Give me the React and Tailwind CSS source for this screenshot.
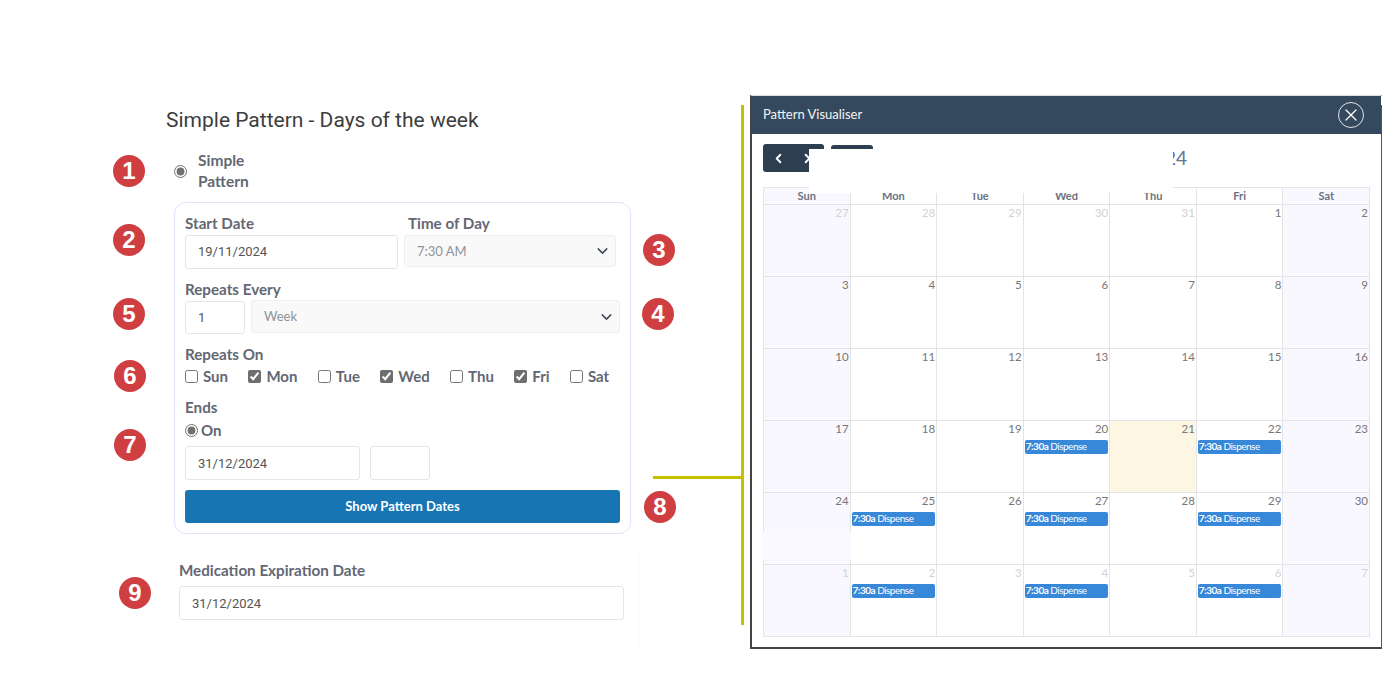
import { ChevronDown, ChevronLeft, ChevronRight, X } from "lucide-react";

const weeks = [
  [27, 28, 29, 30, 31, 1, 2],
  [3, 4, 5, 6, 7, 8, 9],
  [10, 11, 12, 13, 14, 15, 16],
  [17, 18, 19, 20, 21, 22, 23],
  [24, 25, 26, 27, 28, 29, 30],
  [1, 2, 3, 4, 5, 6, 7],
];

const dayNames = ["Sun", "Mon", "Tue", "Wed", "Thu", "Fri", "Sat"];
const checkedDays = ["Mon", "Wed", "Fri"];

// [week index, day index] of every cell that holds an event
const events = ["3-3", "3-5", "4-1", "4-3", "4-5", "5-1", "5-3", "5-5"];

const badges = [
  { n: 1, cls: "left-[113px] top-[155px]" },
  { n: 2, cls: "left-[113px] top-[224px]" },
  { n: 3, cls: "left-[643px] top-[234px]" },
  { n: 4, cls: "left-[642px] top-[298px]" },
  { n: 5, cls: "left-[113px] top-[298px]" },
  { n: 6, cls: "left-[114px] top-[360px]" },
  { n: 7, cls: "left-[114px] top-[429px]" },
  { n: 8, cls: "left-[644px] top-[491px]" },
  { n: 9, cls: "left-[119px] top-[577px]" },
];

function Badge({ n, cls }) {
  return (
    <div className={`absolute ${cls} flex h-8 w-8 items-center justify-center rounded-full bg-[#cf3f42] font-['Liberation_Sans',sans-serif] text-[24px] font-bold text-white`}>
      {n}
    </div>
  );
}

function Field({ value, className }) {
  return (
    <input
      readOnly
      defaultValue={value}
      className={`block rounded-[3px] border border-[#e6e6e6] bg-white px-3 font-['Roboto',sans-serif] text-[13px] text-[#555] outline-none ${className}`}
    />
  );
}

function Select({ value, className, selectClass = "" }) {
  return (
    <div className={`relative ${className}`}>
      <select
        disabled
        defaultValue={value}
        className={`h-full w-full appearance-none rounded-[3px] border border-[#efefef] bg-[#f9f9f9] px-3 text-[13px] text-[#8d9499] opacity-100 outline-none ${selectClass}`}
      >
        <option>{value}</option>
      </select>
      <ChevronDown className="absolute right-[5px] top-1/2 h-[17px] w-[17px] -translate-y-1/2 text-[#3f4756]" strokeWidth={2} />
    </div>
  );
}

function Label({ children, className = "" }) {
  return <div className={`text-[15.2px] font-bold leading-[18px] text-[#636773] ${className}`}>{children}</div>;
}

function PatternForm() {
  return (
    <div className="w-[750px] pl-[174px] pt-[108px]">
      <h2 className="-ml-2 font-['Roboto',sans-serif] text-[21px] leading-6 text-[#3d3d3d]">Simple Pattern - Days of the week</h2>
      <div className="mt-[18px] flex items-center gap-[11px]">
        <input type="radio" readOnly checked className="h-[13px] w-[13px] accent-[#707070]" />
        <div className="text-[15.5px] font-bold leading-[21px] text-[#636773]">
          Simple
          <br />
          Pattern
        </div>
      </div>

      <div className="mt-[10px] h-[332px] w-[457px] rounded-[12px] border border-[#e3e0fb] pl-[10px] pt-[11px]">
        <div className="flex">
          <div>
            <Label>Start Date</Label>
            <Field value="19/11/2024" className="mt-[3px] h-[34px] w-[213px] pb-[1px]" />
          </div>
          <div className="ml-[6px]">
            <Label className="ml-[4px]">Time of Day</Label>
            <Select value="7:30 AM" className="mt-[3px] h-[32px] w-[212px]" selectClass="pt-[1px]" />
          </div>
        </div>

        <Label className="mt-[11px]">Repeats Every</Label>
        <div className="mt-[2px] flex items-start gap-[6px]">
          <Field value="1" className="mt-[1px] h-[33px] w-[60px] pb-[1px]" />
          <Select value="Week" className="h-[33px] w-[369px]" />
        </div>

        <Label className="mt-[11px]">Repeats On</Label>
        <div className="mt-[4px] flex h-[18px] items-center gap-[20.4px]">
          {dayNames.map((d) => (
            <label key={d} className="flex items-center gap-[5px] text-[15px] font-bold text-[#636773]">
              <input type="checkbox" readOnly checked={checkedDays.includes(d)} className="h-[13px] w-[13px] accent-[#6e6e6e]" />
              {d}
            </label>
          ))}
        </div>

        <Label className="mt-[13px]">Ends</Label>
        <label className="mt-[5px] flex items-center gap-[3px] text-[15px] font-bold leading-[18px] text-[#636773]">
          <input type="radio" readOnly checked className="h-[13px] w-[13px] accent-[#707070]" />
          On
        </label>
        <div className="mt-[7px] flex gap-[10px]">
          <Field value="31/12/2024" className="h-[34px] w-[175px]" />
          <Field value="" className="h-[34px] w-[60px]" />
        </div>
        <button className="mt-[10px] block h-[33px] w-[435px] rounded-[3px] bg-[#1775b4] text-[13px] font-bold text-white">
          Show Pattern Dates
        </button>
      </div>

      <div className="ml-[5px] mt-[27px]">
        <Label>Medication Expiration Date</Label>
        <Field value="31/12/2024" className="mt-[7px] h-[34px] w-[445px]" />
      </div>
    </div>
  );
}

function Calendar() {
  return (
    <div className="ml-[11px] mt-[15px] w-[607px] border-l border-t border-[#e4e4e4]">
      <div className="grid h-[17px] grid-cols-7">
        {dayNames.map((d, i) => (
          <div
            key={d}
            className={`border-b border-r border-[#e4e4e4] text-center text-[11px] font-bold leading-[15px] text-[#6c7280] ${i === 0 || i === 6 ? "bg-[#f9f8ff]" : ""}`}
          >
            {d}
          </div>
        ))}
      </div>
      {weeks.map((week, w) => (
        <div key={w} className="grid h-[72px] grid-cols-7">
          {week.map((day, d) => {
            const other = w === 0 ? day > 20 : w === 5;
            const today = w === 3 && d === 4;
            const weekend = d === 0 || d === 6;
            return (
              <div
                key={d}
                className={`border-b border-r border-[#e4e4e4] px-[1px] ${today ? "bg-[#fdf6e3]" : weekend ? "bg-[#f9f8ff]" : ""}`}
              >
                <div className={`text-right text-[11.5px] leading-[16px] ${other ? "text-[#d2d2d2]" : "text-[#777]"}`}>{day}</div>
                {events.includes(`${w}-${d}`) && (
                  <div className="mt-[3px] flex h-[14px] items-center gap-[2px] whitespace-nowrap rounded-[2px] bg-[#3788d8] pb-[1px] pl-[1px] text-[10px] tracking-[-0.5px] text-white">
                    <b>7:30a</b>
                    <span>Dispense</span>
                  </div>
                )}
              </div>
            );
          })}
        </div>
      ))}
    </div>
  );
}

function Visualiser() {
  return (
    <div className="mt-[95px] h-[554px] w-[632px] border-b-2 border-l-2 border-r border-t border-b-[#444] border-l-[#444] border-r-[#555] border-t-[#dddddd]">
      <div className="flex h-[38px] items-center justify-between bg-[#34495e] pl-[11px] pr-[17px]">
        <span className="text-[13px] text-[#f4f4f4]">Pattern Visualiser</span>
        <span className="flex h-[26px] w-[26px] items-center justify-center rounded-full border border-[#dfe4e8] text-white">
          <X className="h-[20px] w-[20px]" strokeWidth={1.5} />
        </span>
      </div>
      <div className="ml-[11px] mt-[10px] flex h-[28px] items-start">
        <div className="flex h-[28px] w-[61px] items-center gap-[14px] rounded-[3px] bg-[#2c3e50] pl-[8px] text-white">
          <ChevronLeft className="h-[15px] w-[15px]" strokeWidth={3} />
          <ChevronRight className="h-[15px] w-[15px]" strokeWidth={3} />
        </div>
        <div className="ml-[7px] mt-[1px] h-[20px] w-[42px] rounded-[3px] bg-[#2c3e50]" />
        <div className="ml-auto mr-[194px] text-[19px] leading-[28px] text-[#5f7690]">November 2024</div>
      </div>
      <Calendar />
    </div>
  );
}

export default function App() {
  return (
    <div className="relative flex h-[700px] w-[1400px] overflow-hidden bg-white font-['Lato',sans-serif]">
      <PatternForm />
      <Visualiser />

      {/* annotation layer: connector lines, number pins and the white paint-overs */}
      <div className="absolute left-[741px] top-[105px] h-[520px] w-[3px] bg-[#c8bf00]" />
      <div className="absolute left-[653px] top-[476px] h-[3px] w-[90px] bg-[#c8bf00]" />
      <div className="absolute left-[639px] top-[548px] h-[102px] w-px bg-[#fafafa]" />
      <div className="absolute left-[809px] top-[149px] h-[44px] w-[364px] bg-white" />
      <div className="absolute left-[762px] top-[531px] h-[29px] w-[89px] bg-[#faf9ff]" />
      <div className="absolute left-[1381px] top-[96px] h-[9px] w-px bg-white" />
      {badges.map((b) => (
        <Badge key={b.n} {...b} />
      ))}
    </div>
  );
}
